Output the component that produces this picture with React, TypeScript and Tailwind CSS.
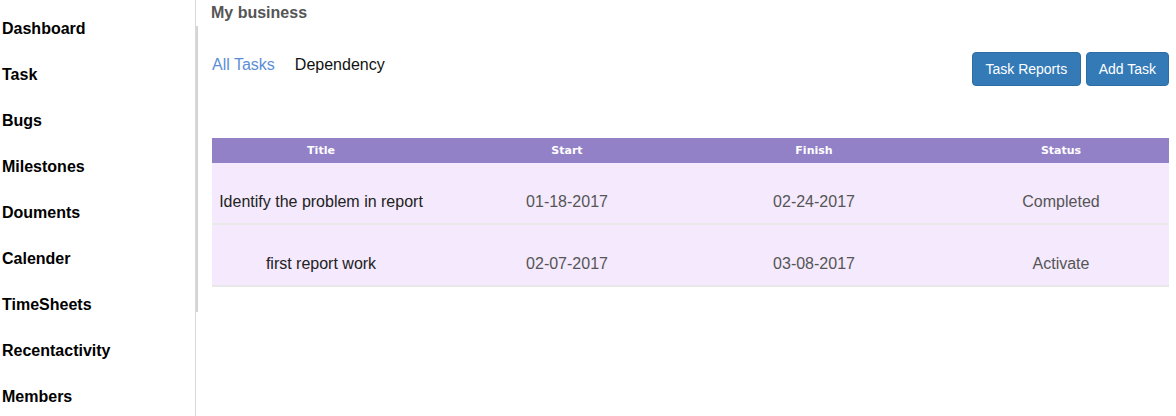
const menu = [
  "Dashboard",
  "Task",
  "Bugs",
  "Milestones",
  "Douments",
  "Calender",
  "TimeSheets",
  "Recentactivity",
  "Members",
];

type Task = { title: string; start: string; finish: string; status: string };

const tasks: Task[] = [
  { title: "Identify the problem in report", start: "01-18-2017", finish: "02-24-2017", status: "Completed" },
  { title: "first report work", start: "02-07-2017", finish: "03-08-2017", status: "Activate" },
];

const cols = "grid grid-cols-[218px_274px_220px_1fr]";

export default function App() {
  return (
    <div className="flex h-[416px] w-full overflow-hidden bg-white font-['Liberation_Sans',Arial,sans-serif]">
      <aside className="w-[196px] shrink-0 border-r border-[#d9d9d9] pt-[6px] pl-[2px]">
        {menu.map((item) => (
          <div key={item} className="h-[46px] text-[16px] font-bold leading-[46px] text-black">
            {item}
          </div>
        ))}
      </aside>

      <main className="flex-1 pr-[7px]">
        <h1 className="h-[26px] pl-[15px] text-[16px] font-bold leading-[26px] text-[#555]">My business</h1>

        <section className="h-[286px] border-l-2 border-[#d4d4d4] pl-[14px]">
          <div className="flex items-start justify-between pt-[26px]">
            <nav className="flex gap-[20px] pt-[4px] text-[16px] leading-[18px]">
              <span className="text-[#5b8ed6]">All Tasks</span>
              <span className="text-[#111]">Dependency</span>
            </nav>
            <div className="flex gap-[5px]">
              <button className="h-[34px] rounded-[4px] border border-[#2e6da4] bg-[#337ab7] px-[12.5px] pt-[1px] text-[14px] text-white">
                Task Reports
              </button>
              <button className="h-[34px] rounded-[4px] border border-[#2e6da4] bg-[#337ab7] px-[12px] pt-[1px] text-[14px] text-white">
                Add Task
              </button>
            </div>
          </div>

          <div className="mt-[52px]">
            <div className={`${cols} h-[25px] bg-[#9381c7] font-['DejaVu_Sans',Verdana,sans-serif] text-[11px] font-bold leading-[25px] text-white`}>
              <div className="text-center">Title</div>
              <div className="text-center">Start</div>
              <div className="text-center">Finish</div>
              <div className="pl-[29px] text-center">Status</div>
            </div>
            {tasks.map((t) => (
              <div
                key={t.title}
                className={`${cols} border-b-2 border-[#e8e8e8] bg-[#f4e9fd] pt-[30px] pb-[12px] text-[16px] leading-[18px]`}
              >
                <div className="text-center text-[#222]">{t.title}</div>
                <div className="text-center text-[#555]">{t.start}</div>
                <div className="text-center text-[#555]">{t.finish}</div>
                <div className="pl-[29px] text-center text-[#555]">{t.status}</div>
              </div>
            ))}
          </div>
        </section>
      </main>
    </div>
  );
}
